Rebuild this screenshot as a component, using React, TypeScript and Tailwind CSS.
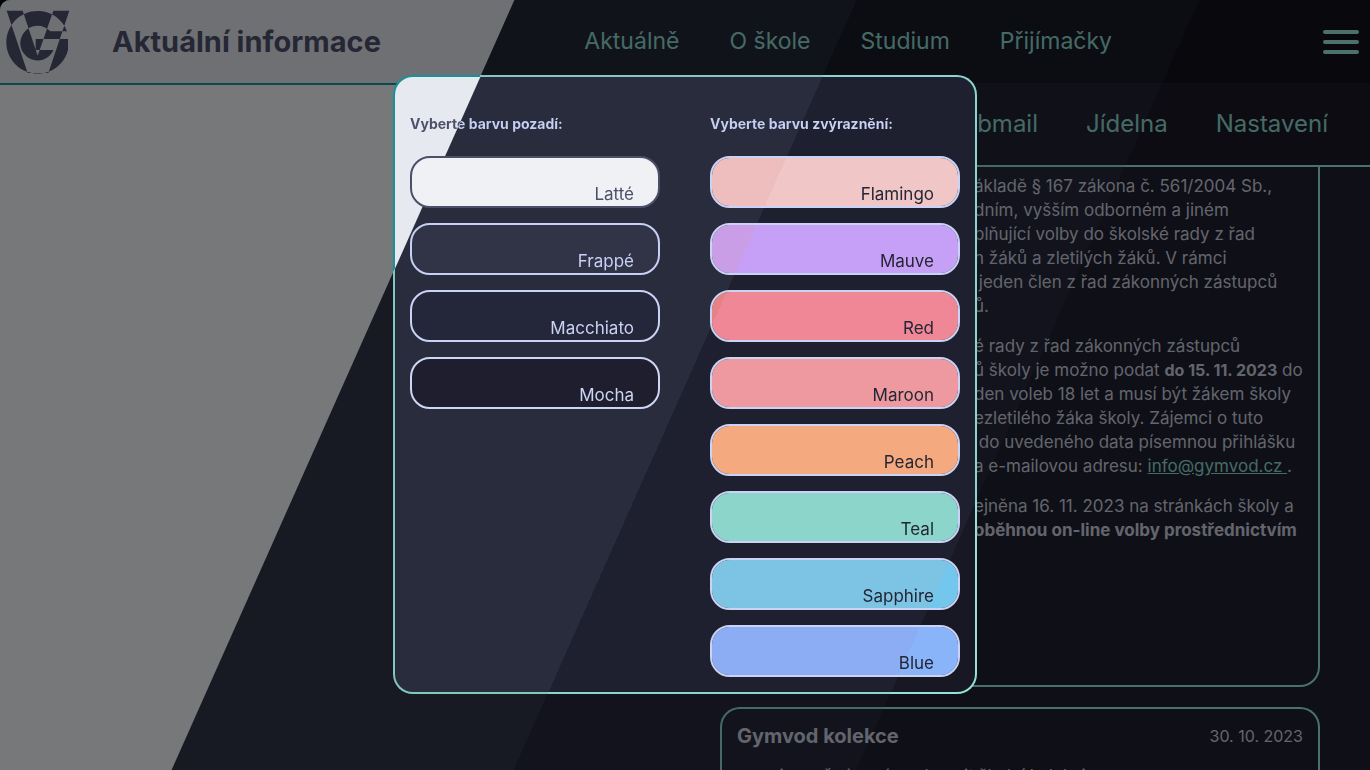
import React from "react";

/* Every surface shares one viewport-fixed diagonal, so the four palettes line up across elements. */
const SURFACE =
  "bg-fixed bg-[linear-gradient(114deg,var(--l)_30%,var(--f)_calc(30%+1px),var(--f)_50%,var(--m)_50%,var(--m)_70%,var(--k)_70%)]";

/* Same diagonal, with a second set of colours painted under a transparent border. */
const FRAME =
  "border-transparent [background:linear-gradient(114deg,var(--l)_30%,var(--f)_calc(30%+1px),var(--f)_50%,var(--m)_50%,var(--m)_70%,var(--k)_70%)_fixed_padding-box,linear-gradient(114deg,#179299_30%,#81c8be_30%,#81c8be_50%,#8bd5ca_50%,#8bd5ca_70%,#94e2d5_70%)_fixed_border-box]";

const BASE = "[--l:#eff1f5] [--f:#303446] [--m:#24273a] [--k:#1e1e2e]";
const MANTLE = "[--l:#e6e9ef] [--f:#292c3c] [--m:#1e2030] [--k:#181825]";
const CRUST = "[--l:#dce0e8] [--f:#232634] [--m:#181926] [--k:#11111b]";
const TEXT = "[--l:#4c4f69] [--f:#c6d0f5] [--m:#cad3f5] [--k:#cdd6f4]";

interface Swatch {
  name: string;
  look: string;
}

const backgrounds: Swatch[] = [
  { name: "Latté", look: "bg-[#eff1f5] border-[#4c4f69] text-[#4c4f69]" },
  { name: "Frappé", look: "bg-[#303446] border-[#c6d0f5] text-[#c6d0f5]" },
  { name: "Macchiato", look: "bg-[#24273a] border-[#cad3f5] text-[#cad3f5]" },
  { name: "Mocha", look: "bg-[#1e1e2e] border-[#cdd6f4] text-[#cdd6f4]" },
];

const accent = SURFACE + " bg-clip-padding border-[#cad3f5] text-[#232634] ";
const accents: Swatch[] = [
  { name: "Flamingo", look: accent + "[--l:#eebebe] [--f:#eebebe] [--m:#f0c6c6] [--k:#f2cdcd]" },
  { name: "Mauve", look: accent + "[--l:#ca9ee6] [--f:#ca9ee6] [--m:#c6a0f6] [--k:#cba6f7]" },
  { name: "Red", look: accent + "[--l:#e78284] [--f:#e78284] [--m:#f08797] [--k:#f38ba8]" },
  { name: "Maroon", look: accent + "[--l:#ea999c] [--f:#ea999c] [--m:#ee99a0] [--k:#eba0ac]" },
  { name: "Peach", look: accent + "[--l:#ef9f76] [--f:#ef9f76] [--m:#f5a97f] [--k:#fab387]" },
  { name: "Teal", look: accent + "[--l:#81c8be] [--f:#81c8be] [--m:#8bd5ca] [--k:#94e2d5]" },
  { name: "Sapphire", look: accent + "[--l:#85c1dc] [--f:#85c1dc] [--m:#7dc4e4] [--k:#74c7ec]" },
  { name: "Blue", look: accent + "[--l:#8caaee] [--f:#8caaee] [--m:#8cacf4] [--k:#89b4fa]" },
];

function Logo() {
  return (
    <svg viewBox="18 28 192 192" className="size-16 shrink-0" role="img" aria-label="Gymvod">
      <path
        fill="#4c4f69"
        fillRule="evenodd"
        d="M201 92A94 94 0 1 0 204 148V115H107V148H160.6A52 52 0 1 1 151 92ZM20 30H68L113 165L160 30H208L145 217H83Z"
      />
    </svg>
  );
}

function Column({ title, items }: { title: string; items: Swatch[] }) {
  return (
    <section className="flex w-[250px] flex-col">
      <div className="flex h-16 items-center">
        <h2 className={`${SURFACE} ${TEXT} bg-clip-text text-[14px] leading-6 font-bold text-transparent`}>{title}</h2>
      </div>
      <div className="flex flex-col gap-[15px]">
        {items.map((s) => (
          <button
            key={s.name}
            type="button"
            className={`flex h-[52px] items-end justify-end rounded-[20px] border-2 pr-6 text-[17px] leading-6 ${s.look}`}
          >
            {s.name}
          </button>
        ))}
      </div>
    </section>
  );
}

export default function App() {
  return (
    <div className="h-screen bg-black font-['Inter','Noto_Sans',sans-serif]">
      <div className={`relative h-full overflow-hidden rounded-tl-[10px] ${SURFACE} ${BASE}`}>
        <header className={`relative z-10 flex h-[85px] items-center border-b-2 pr-[11px] pl-1.5 ${FRAME} ${CRUST}`}>
          <Logo />
          <h1 className="ml-[42px] text-[29px] font-bold whitespace-nowrap text-[#4c4f69]">Aktuální informace</h1>
          <nav className="mr-[211px] ml-auto flex gap-[50px] text-[23px] whitespace-nowrap text-[#8bd5ca]">
            <a href="#aktualne">Aktuálně</a>
            <a href="#o-skole">O škole</a>
            <a href="#studium">Studium</a>
            <a href="#prijimacky">Přijímačky</a>
          </nav>
          <button type="button" aria-label="Menu" className="flex w-9 flex-col gap-1.5">
            <span className="h-1 rounded-full bg-[#94e2d5]" />
            <span className="h-1 rounded-full bg-[#94e2d5]" />
            <span className="h-1 rounded-full bg-[#94e2d5]" />
          </button>
          <nav
            className={`absolute top-[83px] right-0 flex h-[84px] w-1/2 items-center justify-end gap-12 border-b-2 pr-[42px] text-[24px] text-[#8bd5ca] ${FRAME} ${MANTLE}`}
          >
            <a href="#webmail">Webmail</a>
            <a href="#jidelna">Jídelna</a>
            <a href="#nastaveni">Nastavení</a>
          </nav>
        </header>

        <main className="grid grid-cols-2 gap-[70px] px-[50px] text-[17px] leading-6 text-[#c6cad8]">
          <div className="col-start-2 flex flex-col gap-5">
            <article
              className={`flex h-[602px] flex-col gap-4 rounded-b-[20px] border-2 border-t-0 pt-[89px] pl-[252px] whitespace-nowrap ${FRAME} ${BASE}`}
            >
              <p>
                ákladě § 167 zákona č. 561/2004 Sb.,
                <br />
                dním, vyšším odborném a jiném
                <br />
                plňující volby do školské rady z řad
                <br />
                h žáků a zletilých žáků. V rámci
                <br />
                &nbsp;jeden člen z řad zákonných zástupců
                <br />
                ů.
              </p>
              <p>
                é rady z řad zákonných zástupců
                <br />
                ů školy je možno podat <strong className="text-base leading-6">do 15. 11. 2023</strong> do
                <br />
                den voleb 18 let a musí být žákem školy
                <br />
                ezletilého žáka školy. Zájemci o tuto
                <br />
                &nbsp;do uvedeného data písemnou přihlášku
                <br />a e-mailovou adresu:{" "}
                <a href="mailto:info@gymvod.cz" className="text-[#8bd5ca] underline">
                  info@gymvod.cz&nbsp;
                </a>
                .
              </p>
              <p>
                ejněna 16. 11. 2023 na stránkách školy a
                <br />
                <strong>oběhnou on-line volby prostřednictvím</strong>
              </p>
            </article>

            <article className={`flex h-[200px] flex-col gap-4 rounded-[20px] border-2 p-[15px] ${FRAME} ${BASE}`}>
              <div className="flex justify-between">
                <h2 className="text-[20px] leading-6 font-bold">Gymvod kolekce</h2>
                <time className="text-base leading-6">30. 10. 2023</time>
              </div>
              <p>zase je možné u nás zakoupit školní kolekci</p>
            </article>
          </div>
        </main>
      </div>

      <div className="fixed inset-0 z-20 bg-black/50" />
      <div className="pointer-events-none fixed inset-0 z-30 flex items-center justify-center pb-0.5">
        <div
          role="dialog"
          aria-label="Nastavení barev"
          className={`pointer-events-auto flex gap-[50px] rounded-[20px] border-2 p-[15px] ${FRAME} ${MANTLE}`}
        >
          <Column title="Vyberte barvu pozadí:" items={backgrounds} />
          <Column title="Vyberte barvu zvýraznění:" items={accents} />
        </div>
      </div>
    </div>
  );
}
